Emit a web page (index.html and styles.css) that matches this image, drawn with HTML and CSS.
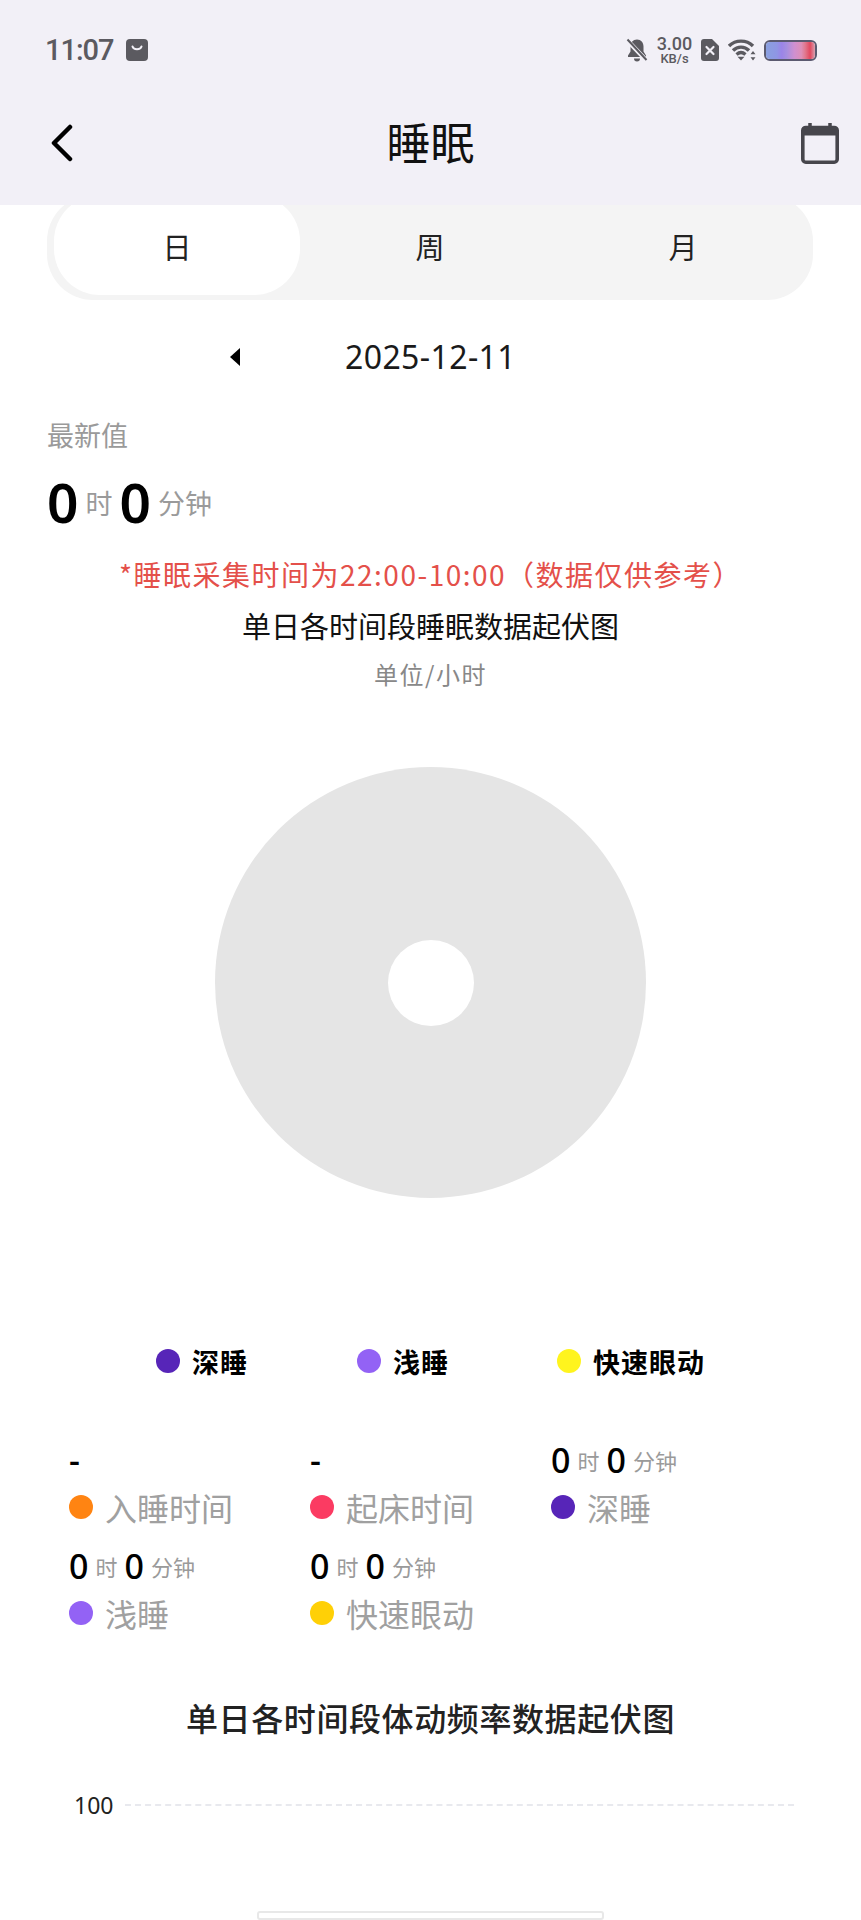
FILE: index.html
```html
<!DOCTYPE html>
<html lang="zh-CN">
<head>
  <meta charset="UTF-8" />
  <meta name="viewport" content="width=device-width, initial-scale=1.0" />
  <title>睡眠</title>
  <link rel="stylesheet" href="styles.css">
</head>
<body>
  <header class="topbar">
    <div class="status">
      <div class="status-left">
        <span class="clock">11:07</span>
        <svg class="bag" viewBox="0 0 22 22"><rect width="22" height="22" rx="4" fill="#5b5a60"/><path d="M6.500 7.500c1 3.500 8 3.500 9 0" fill="none" stroke="#f2f0f7" stroke-width="2" stroke-linecap="round"/></svg>
      </div>
      <div class="status-right">
        <svg class="bell" viewBox="0 0 22 24"><path d="M11 1.500c-4 0-6.500 3-6.500 7v5L2 17.500v1.500h18v-1.500l-2.500-4v-5c0-4-2.500-7-6.500-7z" fill="#5b5a60"/><path d="M8 20.500a3 3 0 0 0 6 0z" fill="#5b5a60"/><path d="M1 2l19 20" stroke="#f2f0f7" stroke-width="4.500"/><path d="M1.500 1.500l19 20.500" stroke="#5b5a60" stroke-width="2"/></svg>
        <div class="speed"><span class="speed-num">3.00</span><span class="speed-unit">KB/s</span></div>
        <svg class="sim" viewBox="0 0 18 22"><path d="M3 0h8l7 7v12a3 3 0 0 1-3 3H3a3 3 0 0 1-3-3V3a3 3 0 0 1 3-3z" fill="#5b5a60"/><path d="M5.500 8l7 7M12.500 8l-7 7" stroke="#f2f0f7" stroke-width="2.200" stroke-linecap="round"/></svg>
        <svg class="wifi" viewBox="0 0 28 22"><path d="M1 7c6.500-6.500 17.500-6.500 24 0" fill="none" stroke="#5b5a60" stroke-width="3.400"/><path d="M5 11.500c4.500-4.500 11.500-4.500 16 0" fill="none" stroke="#5b5a60" stroke-width="3.400"/><path d="M8.500 15.500c2.800-2.500 6.200-2.500 9 0" fill="none" stroke="#5b5a60" stroke-width="3.200"/><path d="M13 21.500l-3.500-3.700h7z" fill="#5b5a60"/><path d="M25 12l-2.500 3.200h5zM25 21.500l-2.500-3.200h5z" fill="#5b5a60"/></svg>
        <div class="battery"><div class="battery-fill"></div></div>
      </div>
    </div>
    <div class="navbar">
      <svg class="back" viewBox="0 0 24 38"><path d="M20 3L4 19l16 16" fill="none" stroke="#000" stroke-width="4.500" stroke-linecap="round" stroke-linejoin="round"/></svg>
      <h1 class="page-title">睡眠</h1>
      <svg class="calendar" viewBox="0 0 38 42"><path d="M9 1v5M29 1v5" stroke="#47464c" stroke-width="3.500"/><rect x="1.800" y="5.500" width="34.400" height="34.700" rx="3" fill="none" stroke="#47464c" stroke-width="3.600"/><rect x="2" y="5.500" width="34" height="8" fill="#47464c"/></svg>
    </div>
  </header>

  <main class="content">
    <div class="tabs">
      <div class="tab"><span class="pill active">日</span></div>
      <div class="tab"><span class="pill">周</span></div>
      <div class="tab"><span class="pill">月</span></div>
    </div>

    <div class="date-row">
      <div class="date-prev"><span class="arrow-left"></span></div>
      <div class="date-text">2025-12-11</div>
    </div>

    <section class="latest">
      <div class="latest-label">最新值</div>
      <div class="latest-value"><b>0</b><span>时</span><b>0</b><span>分钟</span></div>
    </section>

    <p class="notice">*睡眠采集时间为22:00-10:00（数据仅供参考）</p>
    <h2 class="chart-title">单日各时间段睡眠数据起伏图</h2>
    <p class="chart-unit">单位/小时</p>

    <div class="donut-wrap">
      <div class="donut"><div class="donut-hole"></div></div>
    </div>

    <div class="legend">
      <div class="legend-item legend-deep"><i class="dot deep"></i>深睡</div>
      <div class="legend-item legend-light"><i class="dot light"></i>浅睡</div>
      <div class="legend-item legend-rem"><i class="dot rem-bright"></i>快速眼动</div>
    </div>

    <div class="stats">
      <div class="stat">
        <div class="stat-value">-</div>
        <div class="stat-label"><i class="dot orange"></i>入睡时间</div>
      </div>
      <div class="stat">
        <div class="stat-value">-</div>
        <div class="stat-label"><i class="dot pink"></i>起床时间</div>
      </div>
      <div class="stat">
        <div class="stat-value"><b>0</b><span>时</span><b>0</b><span>分钟</span></div>
        <div class="stat-label"><i class="dot deep"></i>深睡</div>
      </div>
      <div class="stat">
        <div class="stat-value"><b>0</b><span>时</span><b>0</b><span>分钟</span></div>
        <div class="stat-label"><i class="dot light"></i>浅睡</div>
      </div>
      <div class="stat">
        <div class="stat-value"><b>0</b><span>时</span><b>0</b><span>分钟</span></div>
        <div class="stat-label"><i class="dot rem"></i>快速眼动</div>
      </div>
    </div>

    <h2 class="motion-title">单日各时间段体动频率数据起伏图</h2>

    <div class="motion-axis">
      <span class="axis-label">100</span>
      <div class="axis-line"></div>
    </div>
  </main>

  <div class="scroll-handle"></div>
</body>
</html>
```

FILE: styles.css
```css
html, body {
  margin: 0;
  padding: 0;
}
body {
  width: 861px;
  height: 1920px;
  overflow: hidden;
  background: #fff;
  color: #000;
  font-family: "Noto Sans", "Noto Sans CJK SC", sans-serif;
  position: relative;
}
.topbar {
  height: 205px;
  background: #f2f0f7;
  position: relative;
  z-index: 2;
}
.status {
  height: 100px;
  display: flex;
  justify-content: space-between;
  align-items: center;
  padding: 0 45px;
}
.status-left {
  display: flex;
  align-items: center;
  gap: 12px;
}
.clock {
  font-family: Roboto, sans-serif;
  font-size: 29px;
  font-weight: 500;
  letter-spacing: -1px;
  color: #5b5a60;
}
.bag {
  width: 22px;
  height: 22px;
}
.status-right {
  display: flex;
  align-items: center;
}
.bell {
  width: 22px;
  height: 24px;
  margin-right: 8px;
}
.speed {
  width: 37px;
  display: flex;
  flex-direction: column;
  align-items: center;
  color: #5b5a60;
  font-family: Roboto, sans-serif;
  font-weight: 500;
  margin-right: 8px;
}
.speed-num {
  font-size: 18px;
  line-height: 16px;
}
.speed-unit {
  font-size: 13px;
  line-height: 13px;
}
.sim {
  width: 18px;
  height: 22px;
  margin-right: 9px;
}
.wifi {
  width: 28px;
  height: 22px;
  margin-right: 8px;
}
.battery {
  width: 53px;
  height: 21px;
  box-sizing: border-box;
  border: 2px solid #5b5a70;
  border-radius: 6px;
  overflow: hidden;
  margin-right: -1px;
}
.battery-fill {
  height: 100%;
  background: linear-gradient(90deg, #8aa0e0 0%, #8f96e4 22%, #9b84e8 32%, #a58fe0 42%, #cf90d0 58%, #dd8fb8 72%, #e0788e 80%, #e2485f 90%, #d8a0b0 100%);
}
.navbar {
  height: 105px;
  display: flex;
  justify-content: space-between;
  align-items: flex-start;
  padding: 0 22px 0 50px;
  position: relative;
}
.back {
  width: 24px;
  height: 38px;
  margin-top: 24px;
}
.page-title {
  position: absolute;
  left: 0;
  right: 0;
  top: 9px;
  margin: 0;
  text-align: center;
  font-family: "Noto Sans CJK SC", sans-serif;
  font-size: 44px;
  line-height: 64px;
  font-weight: 400;
  color: #111;
}
.calendar {
  width: 38px;
  height: 42px;
  margin-top: 22px;
}

.tabs {
  margin: -10px 48px 0 47px;
  height: 105px;
  background: #f4f4f4;
  border-radius: 46px;
  display: flex;
  justify-content: center;
}
.tab {
  flex: 0 0 253px;
  display: flex;
  justify-content: center;
}
.pill {
  width: 246px;
  height: 100px;
  box-sizing: border-box;
  border-radius: 46px;
  display: flex;
  align-items: center;
  justify-content: center;
  padding-top: 2px;
  font-family: "Noto Sans CJK SC", sans-serif;
  font-size: 29px;
  color: #222;
}
.active {
  background: #fff;
}
.date-row {
  margin-top: 27px;
  height: 60px;
  display: grid;
  grid-template-columns: 1fr auto 1fr;
  align-items: center;
}
.date-prev {
  display: flex;
  justify-content: flex-end;
  padding-right: 105px;
}
.arrow-left {
  width: 0;
  height: 0;
  border-top: 9px solid transparent;
  border-bottom: 9px solid transparent;
  border-right: 10px solid #000;
}
.date-text {
  font-size: 32px;
  line-height: 60px;
  letter-spacing: 0.4px;
  color: #1a1a1a;
}
.latest {
  margin: 28px 47px 0;
}
.latest-label {
  font-family: "Noto Sans CJK SC", sans-serif;
  font-size: 27px;
  line-height: 40px;
  color: #9a9a9a;
}
.latest-value {
  margin-top: 17px;
  height: 60px;
  display: flex;
  align-items: center;
  gap: 7px;
  font-family: "Noto Sans CJK SC", sans-serif;
  font-size: 27px;
  color: #9a9a9a;
}
.latest-value b {
  font-family: "Noto Sans", sans-serif;
  font-size: 55px;
  line-height: 60px;
  font-weight: 600;
  color: #000;
}
.notice {
  margin: 22px 0 0;
  text-align: center;
  font-family: "Noto Sans CJK SC", sans-serif;
  font-size: 28px;
  line-height: 40px;
  letter-spacing: 1.5px;
  color: #e4504a;
}
.chart-title {
  margin: 11px 0 0;
  text-align: center;
  font-family: "Noto Sans CJK SC", sans-serif;
  font-size: 29px;
  line-height: 40px;
  font-weight: 400;
  color: #111;
}
.chart-unit {
  margin: 12px 0 0;
  text-align: center;
  font-family: "Noto Sans CJK SC", sans-serif;
  font-size: 24px;
  line-height: 34px;
  letter-spacing: 1.5px;
  color: #888;
}
.donut-wrap {
  margin-top: 76px;
  display: flex;
  justify-content: center;
}
.donut {
  width: 431px;
  height: 431px;
  border-radius: 50%;
  background: #e5e5e5;
  display: flex;
  align-items: center;
  justify-content: center;
}
.donut-hole {
  width: 86px;
  height: 86px;
  border-radius: 50%;
  background: #fff;
}
.dot {
  display: inline-block;
  flex: none;
  width: 24px;
  height: 24px;
  border-radius: 50%;
}
.deep { background: #5725b8; }
.light { background: #9362f5; }
.rem-bright { background: #fff41e; }
.rem { background: #ffd006; }
.orange { background: #ff8412; }
.pink { background: #fb3b62; }
.legend {
  margin-top: 143px;
  height: 40px;
  display: flex;
  font-family: "Noto Sans CJK SC", sans-serif;
  font-size: 27px;
  letter-spacing: 1px;
  font-weight: 700;
  color: #000;
}
.legend-item {
  display: flex;
  align-items: center;
  gap: 12px;
}
.legend-deep {
  margin-left: 156px;
  width: 201px;
}
.legend-light {
  width: 200px;
}
.stats {
  margin: 59px 0 0 69px;
  display: grid;
  grid-template-columns: repeat(3, 241px);
  row-gap: 16px;
}
.stat-value {
  height: 40px;
  display: flex;
  align-items: center;
  gap: 7px;
  font-family: "Noto Sans", sans-serif;
  font-size: 34px;
  font-weight: 500;
  color: #000;
}
.stat-value b {
  font-weight: 500;
  font-size: 34px;
}
.stat-value span {
  font-family: "Noto Sans CJK SC", sans-serif;
  font-size: 22px;
  font-weight: 400;
  color: #9a9a9a;
}
.stat-label {
  margin-top: 4px;
  height: 46px;
  display: flex;
  align-items: center;
  gap: 12px;
  font-family: "Noto Sans CJK SC", sans-serif;
  font-size: 32px;
  color: #a0a0a0;
}
.motion-title {
  margin: 58px 0 0;
  text-align: center;
  font-family: "Noto Sans CJK SC", sans-serif;
  font-size: 32px;
  line-height: 46px;
  letter-spacing: 0.6px;
  font-weight: 500;
  color: #222;
}
.motion-axis {
  margin: 47px 67px 0 74px;
  height: 36px;
  display: flex;
  align-items: center;
  gap: 12px;
}
.axis-label {
  font-size: 23px;
  color: #222;
}
.axis-line {
  flex: 1;
  border-top: 2px dashed #e8e9ee;
}
.scroll-handle {
  position: absolute;
  left: 257px;
  bottom: 0;
  width: 347px;
  height: 9px;
  box-sizing: border-box;
  border: 2px solid #e8e8e8;
  border-radius: 3px;
  background: #fff;
}
```
